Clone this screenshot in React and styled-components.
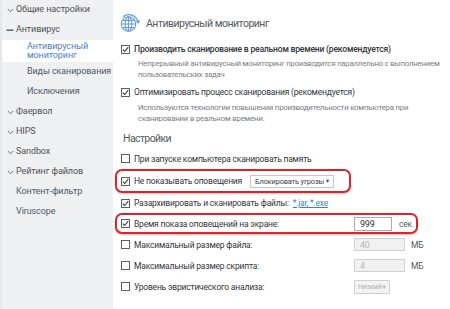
import React from "react";
import styled, { createGlobalStyle } from "styled-components";

const GlobalStyle = createGlobalStyle`
  html, body { margin: 0; padding: 0; background: #fff; }
  body { font-family: Roboto, "Noto Sans", sans-serif; }
  * { box-sizing: border-box; }
`;

const Layout = styled.div`
  display: flex;
  width: 450px;
  height: 309px;
  overflow: hidden;
`;

const Sidebar = styled.nav`
  width: 113px;
  flex: none;
  background: #eff0f2;
  border-left: 2px solid #e4e8ee;
  display: flex;
  flex-direction: column;
`;

const NavItem = styled.div`
  display: flex;
  align-items: center;
  min-height: ${(p) => (p.$active ? 22 : 20)}px;
  padding-left: ${(p) => (p.$sub ? 25 : p.$plain ? 14 : 3)}px;
  background: ${(p) => (p.$active ? "#ffffff" : "transparent")};
  color: ${(p) => (p.$active ? "#4d82c4" : p.$sub || p.$plain ? "#4e5966" : "#505357")};
  font-size: 9px;
  letter-spacing: -0.1px;
  line-height: 9.5px;
  white-space: ${(p) => (p.$active ? "normal" : "nowrap")};
`;

const Marker = styled.span`
  width: 10px;
  display: inline-flex;
  justify-content: center;
  margin-right: 1px;
`;

const Main = styled.main`
  flex: 1;
  padding: 8px 0 0 8px;
  display: flex;
  flex-direction: column;
`;

const Header = styled.div`
  display: flex;
  align-items: center;
  height: 30px;
  margin-left: -2px;
  gap: 5px;
`;

const Title = styled.h1`
  margin: 0;
  font-size: 10.5px;
  letter-spacing: -0.5px;
  font-weight: 400;
  color: #555a60;
`;

const Row = styled.div`
  display: flex;
  align-items: center;
  height: ${(p) => p.$h || 21}px;
  margin-top: ${(p) => p.$mt || 0}px;
  font-size: ${(p) => (p.$bold ? 8.6 : 8.5)}px;
  letter-spacing: ${(p) => (p.$bold ? -0.22 : -0.2)}px;
  color: #33363a;
  font-weight: ${(p) => (p.$bold ? 500 : 400)};
`;

const Box = styled.span`
  width: 9px;
  height: 9px;
  border: 1px solid #5c5f63;
  background: #fff;
  flex: none;
  margin-right: 4px;
  display: inline-flex;
  align-items: center;
  justify-content: center;
`;

const Label = styled.span`
  width: ${(p) => (p.$w ? `${p.$w}px` : "auto")};
  flex: none;
  white-space: nowrap;
`;

const Desc = styled.p`
  margin: ${(p) => p.$mt || 0}px 0 0 0;
  padding-left: 17px;
  font-size: 7.8px;
  letter-spacing: -0.2px;
  line-height: 11px;
  color: #7a7d82;
  white-space: nowrap;
`;

const Section = styled.h2`
  margin: 5px 0 0 2px;
  height: 18px;
  display: flex;
  align-items: center;
  font-size: 10.5px;
  letter-spacing: -0.6px;
  font-weight: 400;
  color: #555a60;
`;

const Highlight = styled.div`
  display: flex;
  align-items: center;
  width: ${(p) => p.$w}px;
  height: ${(p) => p.$h}px;
  margin-left: -6px;
  padding-left: 4px;
  border: 2px solid #d8252b;
  border-radius: 7px;
  box-shadow: 0 1px 2px rgba(0, 0, 0, 0.25);
  font-size: 8.5px;
  letter-spacing: -0.2px;
  color: #33363a;
`;

const Select = styled.span`
  display: inline-flex;
  align-items: center;
  justify-content: space-between;
  width: ${(p) => p.$w}px;
  height: ${(p) => p.$h || 13}px;
  padding: 0 3px 0 ${(p) => (p.$disabled ? 3 : 4)}px;
  border: 1px solid ${(p) => (p.$disabled ? "#cfd1d4" : "#c4c6c9")};
  background: ${(p) => (p.$disabled ? "#f3f3f4" : "#fff")};
  color: ${(p) => (p.$disabled ? "#aeb1b5" : "#3c3f43")};
  font-size: ${(p) => (p.$disabled ? 7 : 7.4)}px;
  letter-spacing: -0.15px;
  white-space: nowrap;
`;

const Caret = styled.span`
  font-size: 5.5px;
  color: ${(p) => (p.$disabled ? "#aeb1b5" : "#4a4d52")};
`;

const Input = styled.span`
  display: inline-flex;
  align-items: center;
  width: ${(p) => p.$w}px;
  height: ${(p) => p.$h || 13}px;
  padding-left: 5px;
  border: 1px solid ${(p) => (p.$disabled ? "#cfd1d4" : "#a9acb0")};
  background: ${(p) => (p.$disabled ? "#f1f1f2" : "#fff")};
  color: ${(p) => (p.$disabled ? "#b6b9bd" : "#2f3236")};
  font-size: 9px;
`;

const Unit = styled.span`
  margin-left: ${(p) => p.$ml || 6}px;
  font-size: 8.5px;
  color: #55585c;
`;

const Link = styled.a`
  color: #3d7fd0;
  text-decoration: underline;
  margin-left: 4px;
`;

const Chevron = () => (
  <svg width="7" height="5" viewBox="0 0 7 5">
    <path d="M0.8 1 L3.5 3.7 L6.2 1" fill="none" stroke="#6b7480" strokeWidth="1" />
  </svg>
);

const Dash = () => (
  <svg width="8" height="3" viewBox="0 0 8 3">
    <rect x="0.5" y="0.5" width="7" height="1.4" fill="#4e5966" />
  </svg>
);

const Check = ({ on }) => (
  <Box>
    {on && (
      <svg width="7" height="7" viewBox="0 0 7 7">
        <path d="M0.8 3.6 L2.7 5.5 L6.3 1.2" fill="none" stroke="#3a3d41" strokeWidth="1.1" />
      </svg>
    )}
  </Box>
);

const GlobeIcon = () => (
  <svg width="22" height="19" viewBox="0 0 22 19">
    <g fill="none" stroke="#6f9fd6" strokeWidth="1.1">
      <circle cx="9.5" cy="10" r="7.3" />
      <ellipse cx="9.5" cy="10" rx="3.3" ry="7.3" />
      <line x1="9.5" y1="2.7" x2="9.5" y2="17.3" />
      <line x1="2.2" y1="10" x2="16.8" y2="10" />
      <path d="M3.2 6.4 H15.8 M3.2 13.6 H15.8" />
      <path d="M4 2.8 A9.3 9.3 0 0 1 18.9 7.8" strokeWidth="1.4" />
    </g>
    <path d="M16.6 7 L19.4 9.9 L21.2 6.2 Z" fill="#6f9fd6" />
  </svg>
);

export default function App() {
  return (
    <>
      <GlobalStyle />
      <Layout>
        <Sidebar>
          <NavItem><Marker><Chevron /></Marker>Общие настройки</NavItem>
          <NavItem><Marker><Dash /></Marker>Антивирус</NavItem>
          <NavItem $sub $active>Антивирусный<br />мониторинг</NavItem>
          <NavItem $sub>Виды сканирования</NavItem>
          <NavItem $sub>Исключения</NavItem>
          <NavItem><Marker><Chevron /></Marker>Фаервол</NavItem>
          <NavItem><Marker><Chevron /></Marker>HIPS</NavItem>
          <NavItem><Marker><Chevron /></Marker>Sandbox</NavItem>
          <NavItem><Marker><Chevron /></Marker>Рейтинг файлов</NavItem>
          <NavItem $plain>Контент-фильтр</NavItem>
          <NavItem $plain>Viruscope</NavItem>
        </Sidebar>
        <Main>
          <Header>
            <GlobeIcon />
            <Title>Антивирусный мониторинг</Title>
          </Header>
          <Row $h={18} $mt={2} $bold>
            <Check on />
            <Label>Производить сканирование в реальном времени (рекомендуется)</Label>
          </Row>
          <Desc>
            Непрерывный антивирусный мониторинг производится параллельно с выполнением
            <br />
            пользовательских задач
          </Desc>
          <Row $h={18} $mt={3}>
            <Check on />
            <Label>Оптимизировать процесс сканирования (рекомендуется)</Label>
          </Row>
          <Desc $mt={1}>
            Используются технологии повышения производительности компьютера при
            <br />
            сканировании в реальном времени.
          </Desc>
          <Section>Настройки</Section>
          <Row $mt={1}>
            <Check />
            <Label>При запуске компьютера сканировать память</Label>
          </Row>
          <Highlight $w={236} $h={24}>
            <Check on />
            <Label $w={116}>Не показывать оповещения</Label>
            <Select $w={84}>Блокировать угрозы<Caret>▼</Caret></Select>
          </Highlight>
          <Row $h={20}>
            <Check on />
            <Label>Разархивировать и сканировать файлы:</Label>
            <Link>*.jar, *.exe</Link>
          </Row>
          <Highlight $w={303} $h={21}>
            <Check on />
            <Label $w={220}>Время показа оповещений на экране:</Label>
            <Input $w={38} $h={14}>999</Input>
            <Unit $ml={7}>сек.</Unit>
          </Highlight>
          <Row>
            <Check />
            <Label $w={220}>Максимальный размер файла:</Label>
            <Input $w={51} $h={13} $disabled>40</Input>
            <Unit>МБ</Unit>
          </Row>
          <Row>
            <Check />
            <Label $w={220}>Максимальный размер скрипта:</Label>
            <Input $w={51} $h={13} $disabled>4</Input>
            <Unit>МБ</Unit>
          </Row>
          <Row>
            <Check />
            <Label $w={220}>Уровень эвристического анализа:</Label>
            <Select $w={36} $h={14} $disabled>Низкий<Caret $disabled>▼</Caret></Select>
          </Row>
        </Main>
      </Layout>
    </>
  );
}
